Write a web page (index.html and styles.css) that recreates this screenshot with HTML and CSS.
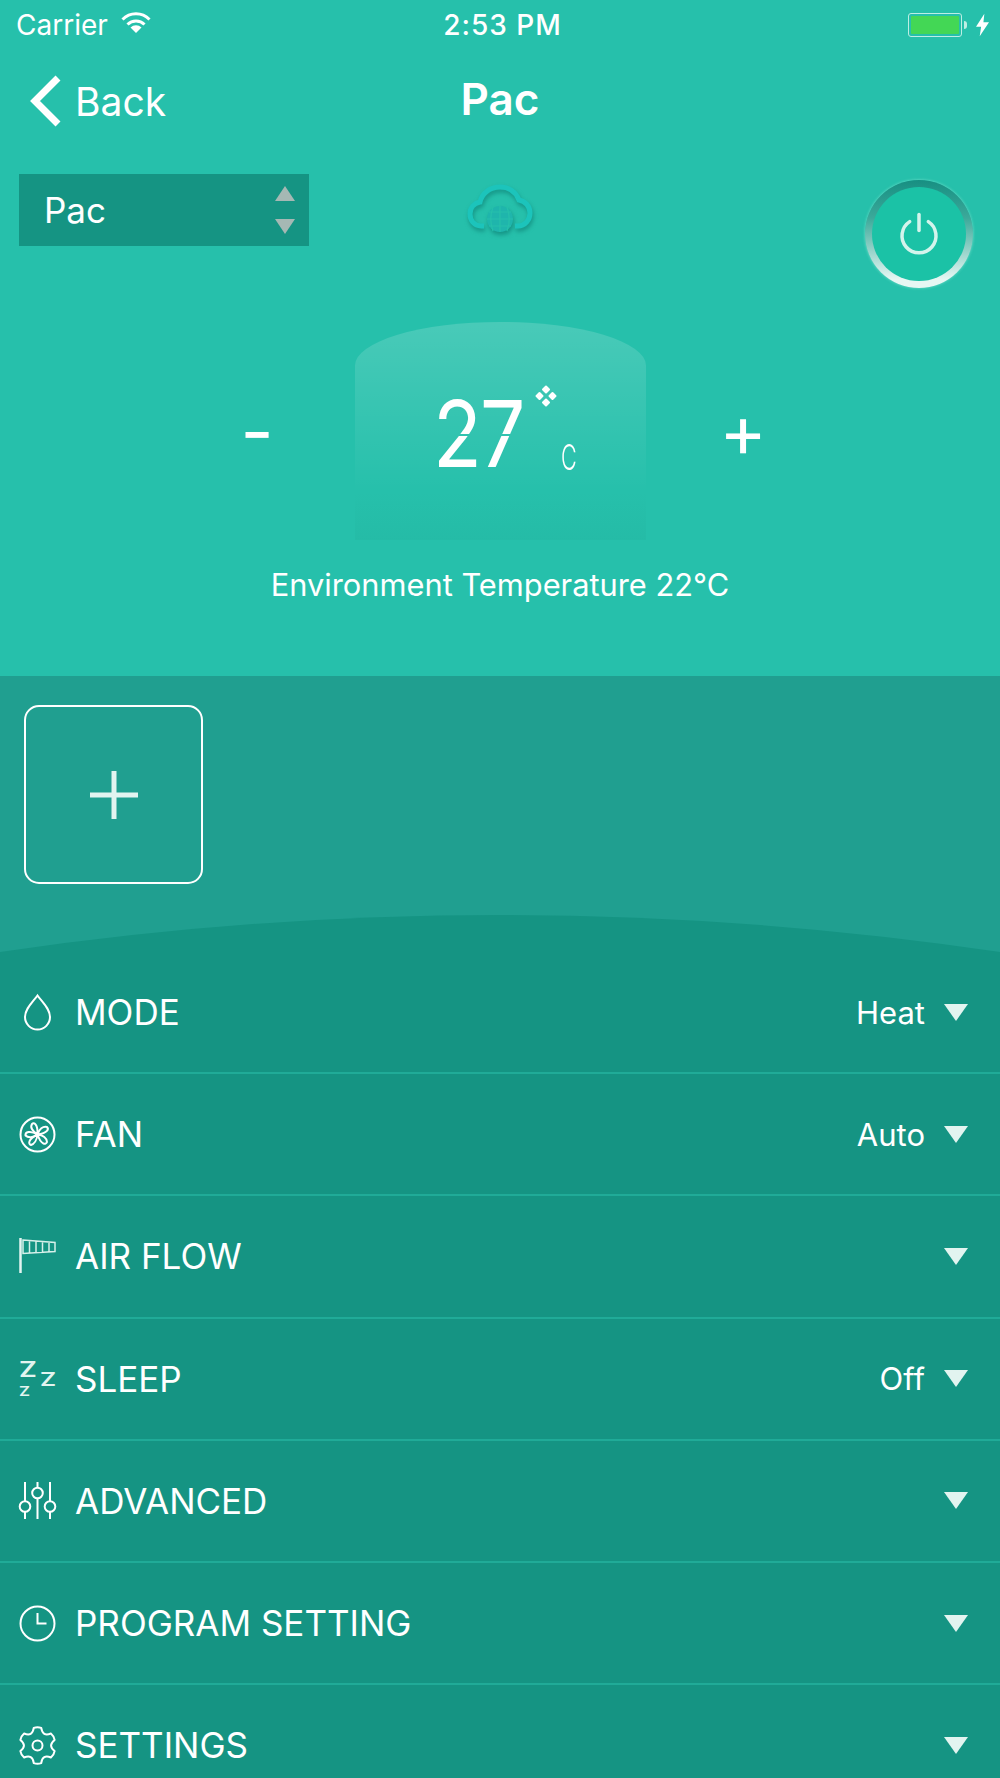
FILE: index.html
```html
<!DOCTYPE html>
<html lang="en">
<head>
  <meta charset="UTF-8" />
  <meta name="viewport" content="width=device-width, initial-scale=1.0"/>
  <title>Pac</title>
  <link rel="stylesheet" href="styles.css">
</head>
<body>
  <div class="screen">
    <section class="top">
      <div class="status-bar">
        <div class="status-left">
          <span>Carrier</span>
          <svg class="wifi" viewBox="0 0 30 22" width="30" height="22">
            <path d="M1.500 7.500a19 19 0 0 1 27 0" fill="none" stroke="#fff" stroke-width="3"/>
            <path d="M6.500 12.500a12 12 0 0 1 17 0" fill="none" stroke="#fff" stroke-width="3"/>
            <path d="M15 21l-5.500-5.500a8 8 0 0 1 11 0z" fill="#fff"/>
          </svg>
        </div>
        <span class="status-time">2:53 PM</span>
        <div class="status-right">
          <div class="battery"><div class="battery-fill"></div></div>
          <div class="battery-cap"></div>
          <svg class="bolt" viewBox="0 0 14 24" width="13" height="24">
            <path d="M9 0L0 14h5.500L4 24l10-15H8z" fill="#fff"/>
          </svg>
        </div>
      </div>

      <header class="nav">
        <div class="back">
          <svg viewBox="0 0 36 54" width="36" height="54">
            <path d="M31 4L8 27l23 23" fill="none" stroke="#fff" stroke-width="7"/>
          </svg>
          <span>Back</span>
        </div>
        <h1>Pac</h1>
      </header>

      <div class="controls">
        <div class="picker">
          <span>Pac</span>
          <div class="picker-arrows">
            <svg viewBox="0 0 20 15" width="20" height="15"><path d="M10 0l10 15H0z" fill="#a5b8b4"/></svg>
            <svg viewBox="0 0 20 15" width="20" height="15"><path d="M0 0h20L10 15z" fill="#a5b8b4"/></svg>
          </div>
        </div>
        <svg class="cloud" viewBox="0 0 66 50" width="66" height="50">
          <path d="M17 43H14C7 43 3 37 3 31c0-7 5-11 10-12C15 10 23 4 33 4c9 0 16 5 19 13 6 1 11 6 11 13 0 7-5 13-12 13h-3" fill="none" stroke="#1cc4bb" stroke-width="5"/>
          <circle cx="33" cy="36" r="13" fill="#1fb5ac"/>
          <path d="M20 36h26M22 29h22M22 43h22M33 23v26M26 24c-3 8-3 16 0 24M40 24c3 8 3 16 0 24" fill="none" stroke="#26c0ab" stroke-width="1.200"/>
        </svg>
        <div class="power">
          <div class="power-inner">
            <svg viewBox="0 0 40 44" width="40" height="44">
              <path d="M10.700 10.600A17 17 0 1 0 29.300 10.600" fill="none" stroke="#d4f4ec" stroke-width="3.500" stroke-linecap="round"/>
              <path d="M20 3.500v16" fill="none" stroke="#d4f4ec" stroke-width="3.500" stroke-linecap="round"/>
            </svg>
          </div>
        </div>
      </div>

      <div class="temp-row">
        <span class="temp-btn">-</span>
        <div class="dome">
          <div class="reading">
            <span class="digits">27</span>
            <svg class="fan-mark" viewBox="0 0 22 22" width="22" height="22">
              <path d="M11 1.500l3 3-3 3-3-3zM4.500 8l3 3-3 3-3-3zM17.500 8l3 3-3 3-3-3zM11 14.500l3 3-3 3-3-3z" fill="#fff" stroke="#fff" stroke-width="2" stroke-linejoin="round"/>
            </svg>
            <span class="unit">C</span>
          </div>
        </div>
        <span class="temp-btn">+</span>
      </div>

      <p class="env">Environment Temperature 22°C</p>
    </section>

    <section class="band">
      <div class="add-box">
        <svg viewBox="0 0 48 48" width="48" height="48">
          <path d="M24 0v48M0 24h48" stroke="#e2f4f0" stroke-width="5"/>
        </svg>
      </div>
      <svg class="curve" viewBox="0 0 1000 37" preserveAspectRatio="none" width="1000" height="37">
        <path d="M0 37Q500 -37 1000 37z" fill="#159483"/>
      </svg>
    </section>

    <section class="list">
      <div class="row">
        <svg class="row-icon" viewBox="0 0 37 37" width="37" height="37">
          <path d="M18.500 1.500C14 8 6 14.500 6 23a12.500 12.500 0 0 0 25 0C31 14.500 23 8 18.500 1.500z" fill="none" stroke="#fff" stroke-width="2"/>
        </svg>
        <span class="row-label">MODE</span>
        <span class="row-value">Heat</span>
        <span class="caret"></span>
      </div>
      <div class="row">
        <svg class="row-icon" viewBox="0 0 37 37" width="37" height="37">
          <circle cx="18.500" cy="18.500" r="17" fill="none" stroke="#fff" stroke-width="2"/>
          <g fill="none" stroke="#fff" stroke-width="2" stroke-linejoin="round">
            <path d="M18.500 18.500C13 15 11 11 13 8c2-2 6 0 5.500 10.500z"/>
            <path d="M18.500 18.500C20 13 24 10 28 11c2 2 1 6-9.500 7.500z"/>
            <path d="M18.500 18.500C24 19 28 22 28 26c-1 3-6 3-9.500-7.500z"/>
            <path d="M18.500 18.500C18 24 15 28 12 29c-3-1-3-6 6.500-10.500z"/>
            <path d="M18.500 18.500C14 22 9 22 6.500 19.500 6 16 11 14 18.500 18.500z"/>
          </g>
        </svg>
        <span class="row-label">FAN</span>
        <span class="row-value">Auto</span>
        <span class="caret"></span>
      </div>
      <div class="row">
        <svg class="row-icon" viewBox="0 0 37 37" width="37" height="37">
          <path d="M1.500 0v35" fill="none" stroke="#e2f4f0" stroke-width="2.500"/>
          <path d="M4 2L36 4.500v9L4 15.500zM10.500 2.500v12.500M17 3v11.500M23.500 3.500v10.500M30 4v9.500" fill="none" stroke="#d6f0ea" stroke-width="1.500"/>
        </svg>
        <span class="row-label">AIR FLOW</span>
        <span class="caret"></span>
      </div>
      <div class="row">
        <svg class="row-icon" viewBox="0 0 37 37" width="37" height="37">
          <text class="zz" transform="translate(0 17) scale(1.300 1)" font-size="21">Z</text>
          <text class="zz" transform="translate(21 26) scale(1.300 1)" font-size="19">Z</text>
          <text class="zz" transform="translate(0 36) scale(1.300 1)" font-size="13">Z</text>
        </svg>
        <span class="row-label">SLEEP</span>
        <span class="row-value">Off</span>
        <span class="caret"></span>
      </div>
      <div class="row">
        <svg class="row-icon" viewBox="0 0 37 37" width="37" height="37">
          <g fill="none" stroke="#fff" stroke-width="2">
            <path d="M6 0v19M6 30v7M18.500 0v5.500M18.500 16.500v20.500M31 0v19M31 30v7"/>
            <circle cx="6" cy="24.500" r="5.300"/>
            <circle cx="18.500" cy="11" r="5.300"/>
            <circle cx="31" cy="24.500" r="5.300"/>
          </g>
        </svg>
        <span class="row-label">ADVANCED</span>
        <span class="caret"></span>
      </div>
      <div class="row">
        <svg class="row-icon" viewBox="0 0 37 37" width="37" height="37">
          <circle cx="18.500" cy="18.500" r="17" fill="none" stroke="#fff" stroke-width="2"/>
          <path d="M18.500 8v10.500h9" fill="none" stroke="#fff" stroke-width="2"/>
        </svg>
        <span class="row-label">PROGRAM SETTING</span>
        <span class="caret"></span>
      </div>
      <div class="row">
        <svg class="row-icon" viewBox="0 0 37 37" width="37" height="37">
          <path d="M22.240 .9Q23.500 9.840 31.880 6.460Q34.950 9 35.620 12.940Q28.500 18.500 35.620 24.060Q34.950 28 31.880 30.540Q23.500 27.160 22.240 36.100Q18.500 37.500 14.760 36.100Q13.500 27.160 5.120 30.540Q2.050 28 1.380 24.060Q8.500 18.500 1.380 12.940Q2.050 9 5.120 6.460Q13.500 9.840 14.760 .9Q18.500 -.5 22.240 .9z" fill="none" stroke="#fff" stroke-width="2" stroke-linejoin="round"/>
          <circle cx="18.500" cy="18.500" r="5" fill="none" stroke="#fff" stroke-width="2"/>
        </svg>
        <span class="row-label">SETTINGS</span>
        <span class="caret"></span>
      </div>
    </section>
  </div>
</body>
</html>
```

FILE: styles.css
```css
* {
  margin: 0;
  padding: 0;
  box-sizing: border-box;
  font-family: Inter, "Liberation Sans", sans-serif;
}
html, body {
  height: 1778px;
  overflow: hidden;
}
body {
  background: #159483;
  color: white;
}
.screen {
  width: 1000px;
  height: 1778px;
  overflow: hidden;
}

/* top part */
.top {
  background: #26c0ab;
  height: 676px;
}
.status-bar {
  height: 50px;
  padding: 0 11px 0 16px;
  display: grid;
  grid-template-columns: 1fr auto 1fr;
  align-items: center;
  font-size: 28px;
}
.status-left {
  display: flex;
  align-items: center;
  gap: 13px;
}
.wifi {
  margin-top: -4px;
}
.status-time {
  font-weight: 500;
  letter-spacing: 1px;
}
.status-right {
  display: flex;
  align-items: center;
  justify-content: flex-end;
}
.battery {
  width: 54px;
  height: 24px;
  border: 1px solid #bdeee3;
  border-radius: 3px;
  padding: 2px;
}
.battery-fill {
  height: 100%;
  background: #43d755;
  border-radius: 1px;
}
.battery-cap {
  width: 3px;
  height: 8px;
  background: #bdeee3;
  margin-left: 2px;
  border-radius: 0 3px 3px 0;
}
.bolt {
  margin-left: 9px;
}

.nav {
  height: 102px;
  position: relative;
  display: flex;
  align-items: center;
  justify-content: center;
}
.back {
  position: absolute;
  left: 27px;
  top: 24px;
  display: flex;
  align-items: center;
  gap: 12px;
  font-size: 39px;
}
.nav h1 {
  font-size: 44px;
  font-weight: 600;
  margin-top: -4px;
}

.controls {
  margin-top: 22px;
  padding: 0 19px;
  height: 114px;
  display: grid;
  grid-template-columns: 1fr auto 1fr;
  align-items: start;
}
.picker {
  width: 290px;
  height: 72px;
  background: #159483;
  padding: 0 14px 0 25px;
  display: flex;
  align-items: center;
  justify-content: space-between;
  font-size: 35px;
}
.picker-arrows {
  display: flex;
  flex-direction: column;
  gap: 18px;
}
.cloud {
  margin-top: 9px;
  filter: drop-shadow(1px 3px 2px rgba(10, 120, 110, 0.6));
}
.power {
  justify-self: end;
  margin: 6px 8px 0 0;
  width: 108px;
  height: 108px;
  border-radius: 50%;
  background: linear-gradient(#178f82 0%, #3ba99a 35%, #e6f7f3 92%);
  box-shadow: 0 0 3px rgba(150, 240, 220, 0.7);
  display: flex;
  align-items: center;
  justify-content: center;
}
.power-inner {
  width: 94px;
  height: 94px;
  border-radius: 50%;
  background: #1bc2a6;
  display: flex;
  align-items: center;
  justify-content: center;
}
.power-inner svg {
  margin-top: -2px;
}

.temp-row {
  margin-top: 34px;
  display: flex;
  justify-content: center;
  align-items: flex-start;
}
.temp-btn {
  width: 195px;
  text-align: center;
  font-size: 72px;
  line-height: 72px;
  margin-top: 73px;
}
.dome {
  width: 291px;
  height: 218px;
  flex: none;
  border-radius: 50% 50% 0 0 / 20% 20% 0 0;
  background: linear-gradient(rgba(255, 255, 255, 0.16), rgba(255, 255, 255, 0) 78%, rgba(20, 130, 110, 0.07));
  display: flex;
  justify-content: center;
}
.reading {
  position: relative;
  margin-top: 66px;
  width: 150px;
  height: 110px;
}
.digits {
  position: absolute;
  left: 8px;
  top: 0;
  font-size: 92px;
  line-height: 92px;
  letter-spacing: -2px;
  transform: scaleX(0.87);
  transform-origin: left;
  -webkit-mask-image: linear-gradient(#000 0 50%, transparent 50% 52.5%, #000 52.5%);
  mask-image: linear-gradient(#000 0 50%, transparent 50% 52.5%, #000 52.5%);
}
.fan-mark {
  position: absolute;
  left: 110px;
  top: -3px;
}
.unit {
  position: absolute;
  left: 136px;
  top: 49px;
  font-size: 36px;
  font-weight: 300;
  line-height: 40px;
  transform: scaleX(0.6);
  transform-origin: left;
}
.env {
  margin-top: 25px;
  text-align: center;
  font-size: 30.8px;
  line-height: 40px;
}

/* middle band */
.band {
  background: #209f90;
  height: 276px;
  padding-top: 29px;
}
.add-box {
  margin-left: 24px;
  width: 179px;
  height: 179px;
  border: 2px solid #fff;
  border-radius: 15px;
  display: flex;
  align-items: center;
  justify-content: center;
}
.curve {
  display: block;
  margin-top: 31px;
}

/* settings list */
.list {
  background: #159483;
}
.row {
  height: 122.2px;
  padding: 0 32px 0 19px;
  border-bottom: 2px solid #20ab98;
  display: flex;
  align-items: center;
  overflow: hidden;
}
.row-icon {
  flex: none;
  overflow: visible;
}
.row-label {
  margin-left: 19px;
  font-size: 35px;
  flex: 1;
}
.row-value {
  font-size: 31px;
  margin-right: 19px;
}
.caret {
  width: 0;
  height: 0;
  border-left: 12px solid transparent;
  border-right: 12px solid transparent;
  border-top: 17px solid #e2f4f0;
}
.zz {
  fill: #e2f4f0;
  font-weight: 600;
}
```
